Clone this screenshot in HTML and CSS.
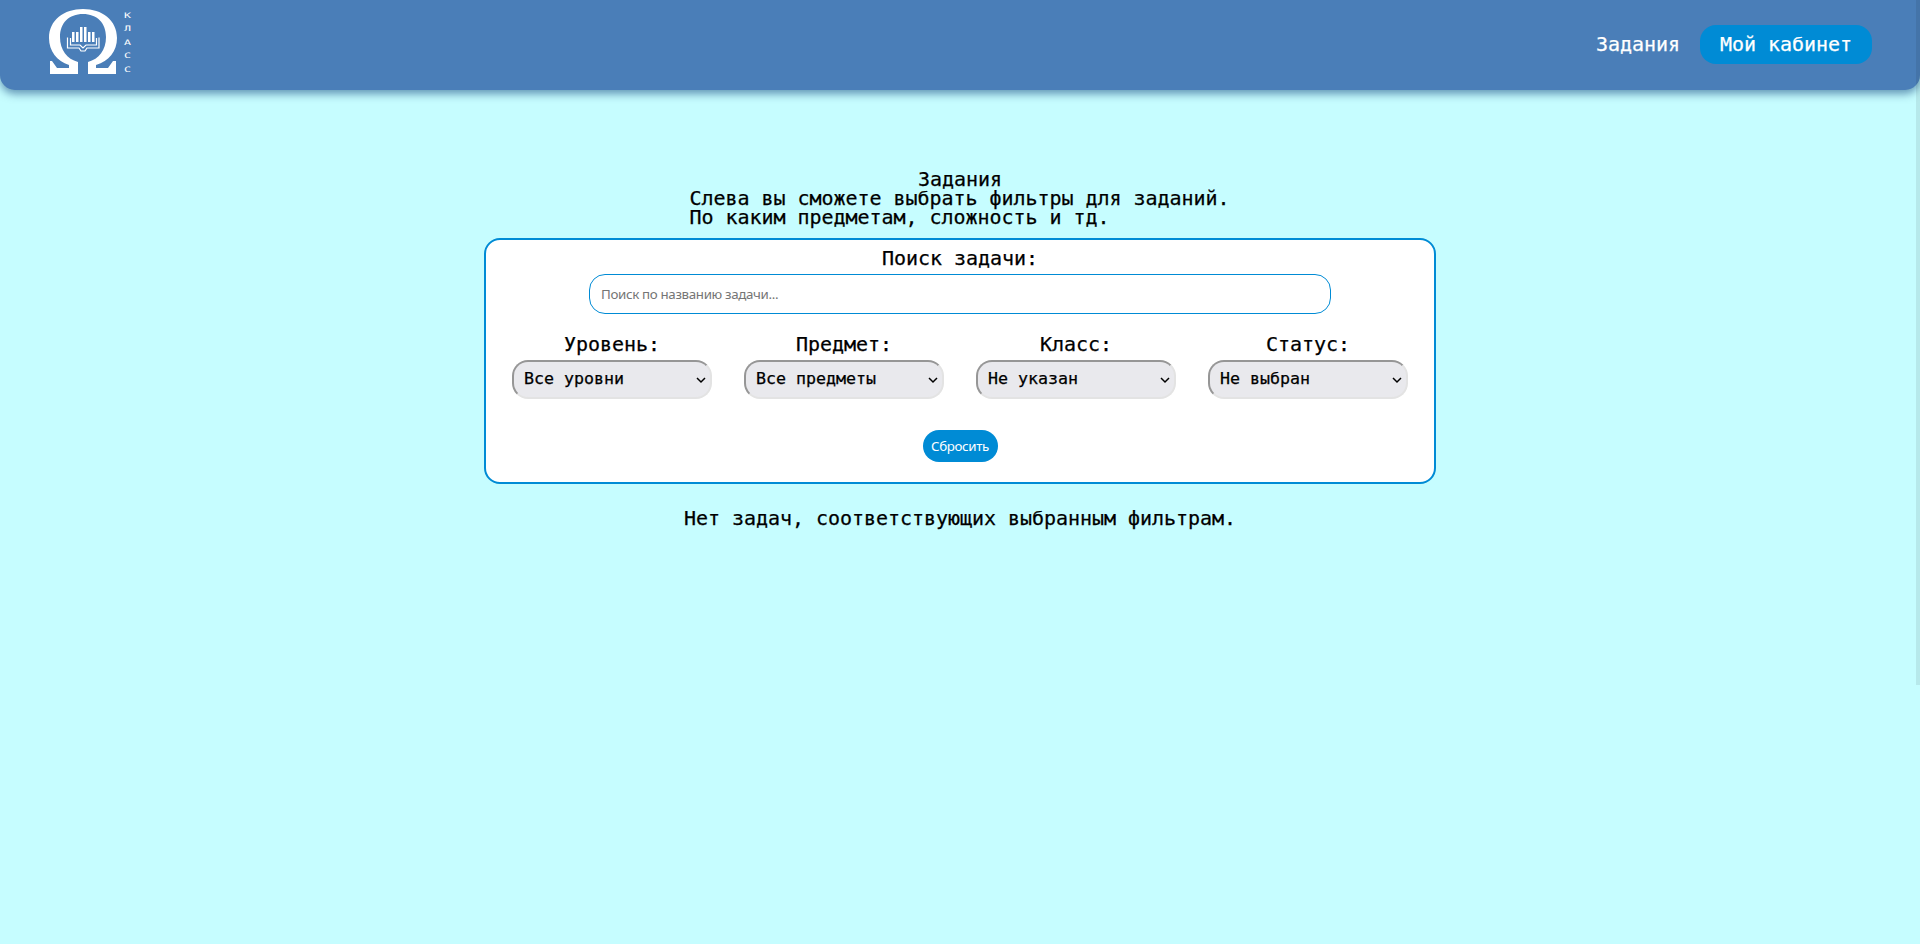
FILE: index.html
```html
<!DOCTYPE html>
<html lang="ru">
<head>
<meta charset="utf-8">
<title>Задания</title>
<link rel="stylesheet" href="styles.css">
</head>
<body>
<header class="header">
  <svg class="logo" width="90" height="72" viewBox="45 4 90 72" fill="#fff">
    <path d="M50 61h2l5 7h12v-3C57 61 49 51 49 38C49 20 64 9 83 9s34 11 34 29c0 13-8 23-21 27v3h12l5-7h3v13H88V62c11-3 18-12 18-25c0-14-9-23-23-23S60 23 60 37c0 13 7 22 18 25v12H50z"/>
    <path d="M72 32h2.500v10H72zM76 32h2.500v10H76zM80 27h2.500v15H80zM84 27h2.500v15H84zM88 32h2.500v10H88zM92 32h2.500v10H92z"/>
    <path d="M67.500 37.500V48H79l2 3h4l2-3h12V37.500M70.500 38v7H80l3 3l3-3h10.500v-7" fill="none" stroke="#fff" stroke-width="1.200"/>
    <g class="logo-word">
      <text x="124" y="17.500" textLength="7" lengthAdjust="spacingAndGlyphs">К</text>
      <text x="124" y="31" textLength="7" lengthAdjust="spacingAndGlyphs">Л</text>
      <text x="124" y="45" textLength="7" lengthAdjust="spacingAndGlyphs">А</text>
      <text x="124" y="58" textLength="7" lengthAdjust="spacingAndGlyphs">С</text>
      <text x="124" y="71.500" textLength="7" lengthAdjust="spacingAndGlyphs">С</text>
    </g>
  </svg>
  <nav class="nav">
    <a class="nav-link">Задания</a>
    <a class="nav-button">Мой кабинет</a>
  </nav>
</header>
<main class="main">
  <div class="title">Задания</div>
  <div class="intro">Слева вы сможете выбрать фильтры для заданий.<br>По каким предметам, сложность и тд.</div>
  <section class="panel">
    <label class="label" for="search">Поиск задачи:</label>
    <input class="search" id="search" type="text" placeholder="Поиск по названию задачи...">
    <div class="filters">
      <div class="filter"><label class="label">Уровень:</label><select class="select"><option>Все уровни</option></select><svg class="chevron" width="10" height="7" viewBox="0 0 10 7"><path d="M1 1l4 4l4-4"/></svg></div>
      <div class="filter"><label class="label">Предмет:</label><select class="select"><option>Все предметы</option></select><svg class="chevron" width="10" height="7" viewBox="0 0 10 7"><path d="M1 1l4 4l4-4"/></svg></div>
      <div class="filter"><label class="label">Класс:</label><select class="select"><option>Не указан</option></select><svg class="chevron" width="10" height="7" viewBox="0 0 10 7"><path d="M1 1l4 4l4-4"/></svg></div>
      <div class="filter"><label class="label">Статус:</label><select class="select"><option>Не выбран</option></select><svg class="chevron" width="10" height="7" viewBox="0 0 10 7"><path d="M1 1l4 4l4-4"/></svg></div>
    </div>
    <button class="reset">Сбросить</button>
  </section>
  <p class="empty">Нет задач, соответствующих выбранным фильтрам.</p>
</main>
<div class="scroll-thumb"></div>
</body>
</html>
```
FILE: styles.css
```css
* { box-sizing: border-box; }
body {
  margin: 0;
  min-height: 944px;
  background: #c6fdff;
  color: #000;
  font: 20px/19.2px "DejaVu Sans Mono", monospace;
  letter-spacing: -0.04px;
}
.header {
  display: flex;
  justify-content: space-between;
  align-items: flex-start;
  height: 90px;
  padding: 4px 48px 0 45px;
  background: #4a7eb8;
  border-radius: 0 0 15px 15px;
  box-shadow: 0 4px 8px rgba(0, 50, 110, 0.5);
}
.logo { display: block; }
.logo-word { font-family: "DejaVu Sans Mono", monospace; font-size: 7.5px; letter-spacing: 0; }
.nav { display: flex; align-items: center; gap: 20px; padding-top: 21px; color: #fff; }
.nav-button {
  height: 39px;
  padding: 0 20px;
  line-height: 39px;
  background: #008bd5;
  border-radius: 16px;
}
.nav-link { line-height: 39px; }
.nav, .title, .intro, .label, .empty, .select { -webkit-text-stroke: 0.25px currentColor; }
.main { display: flex; flex-direction: column; align-items: center; padding-top: 80px; }
.intro { width: 541px; }
.panel {
  display: flex;
  flex-direction: column;
  align-items: center;
  width: 952px;
  height: 246px;
  margin-top: 10px;
  padding-top: 8px;
  background: #fff;
  border: 2px solid #008bd5;
  border-radius: 16px;
}
.label { height: 20px; line-height: 20px; }
.search {
  width: 742px;
  height: 40px;
  margin: 6px 0 0;
  padding: 1px 11px;
  border: 1px solid #008bd5;
  border-radius: 16px;
  background: #fff;
  font: 13.333px "Noto Sans", sans-serif;
  letter-spacing: -0.34px;
}
.search::placeholder { color: #757575; }
.filters { display: flex; gap: 32px; margin-top: 20px; }
.filter {
  position: relative;
  display: flex;
  flex-direction: column;
  align-items: center;
  gap: 6px;
  width: 200px;
}
.select {
  appearance: none;
  width: 200px;
  height: 39px;
  margin: 0;
  padding: 0 10px 2px;
  border: 2px solid;
  border-color: #969696 #e3e3e3 #e3e3e3 #969696;
  border-radius: 16px;
  background: #e9e9ed;
  color: #000;
  font: 16.64px "DejaVu Sans Mono", monospace;
}
.chevron {
  position: absolute;
  right: 6px;
  bottom: 15px;
  fill: none;
  stroke: #000;
  stroke-width: 1.5;
  pointer-events: none;
}
.reset {
  width: 75px;
  height: 32px;
  margin-top: 31px;
  padding: 0;
  border: 0;
  border-radius: 16px;
  background: #008bd5;
  color: #fff;
  font: 13.333px "Noto Sans", sans-serif;
  letter-spacing: -0.34px;
}
.empty { margin: 25px 0 0; }
.scroll-thumb {
  position: absolute;
  top: 0;
  right: 0;
  width: 4px;
  height: 685px;
  background: rgba(0, 0, 0, 0.08);
}
```
